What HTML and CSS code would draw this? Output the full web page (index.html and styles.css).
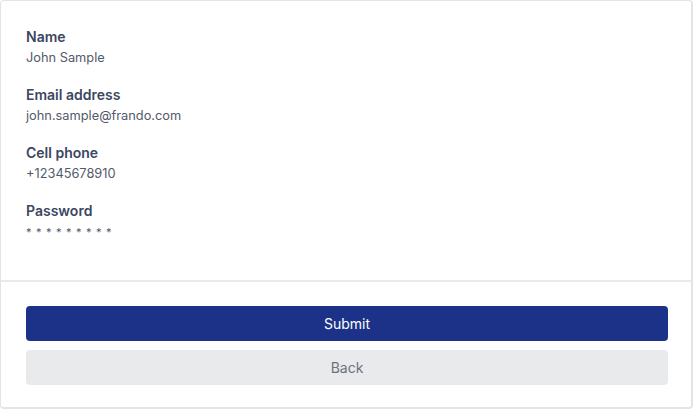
FILE: index.html
```html
<!DOCTYPE html>
<html lang="en">

<head>
    <meta charset="UTF-8">
    <meta name="viewport" content="width=device-width, initial-scale=1.0">
    <title>Review details</title>
    <link rel="stylesheet" href="styles.css">
</head>

<body>

    <div class="card">
        <div class="details">
            <div class="field">
                <p class="field-label">Name</p>
                <p class="field-value">John Sample</p>
            </div>
            <div class="field">
                <p class="field-label">Email address</p>
                <p class="field-value">john.sample@frando.com</p>
            </div>
            <div class="field">
                <p class="field-label">Cell phone</p>
                <p class="field-value">+12345678910</p>
            </div>
            <div class="field">
                <p class="field-label">Password</p>
                <p class="field-value password">* * * * * * * * *</p>
            </div>
        </div>

        <div class="actions">
            <button class="btn btn-primary">Submit</button>
            <button class="btn btn-secondary">Back</button>
        </div>
    </div>

</body>

</html>
```

FILE: styles.css
```css
body {
    margin: 0;
    padding: 0;
    background-color: white;
    font-family: Inter, "Noto Sans", sans-serif;
}

.card {
    width: 693px;
    height: 409px;
    box-sizing: border-box;
    border: 1px solid #e3e4e8;
    border-right-width: 2px;
    border-bottom-width: 2px;
    border-radius: 4px;
    background-color: white;
    display: flex;
    flex-direction: column;
}

.details {
    padding: 26px 25px 0 25px;
    height: 281px;
    box-sizing: border-box;
    border-bottom: 2px solid #e9eaee;
}

.field {
    margin-bottom: 17px;
}

.field-label {
    margin: 0;
    font-size: 14px;
    line-height: 20px;
    font-weight: 600;
    color: #3b4661;
}

.field-value {
    margin: 1px 0 0 0;
    font-size: 12.8px;
    line-height: 20px;
    color: #525a6b;
}

.field-value.password {
    font-size: 11px;
    letter-spacing: 0.7px;
}

.actions {
    display: flex;
    flex-direction: column;
    gap: 9px;
    padding: 24px 23px 0 25px;
}

.btn {
    height: 35px;
    border: none;
    border-radius: 4px;
    font-family: Inter, "Noto Sans", sans-serif;
    font-size: 14px;
    cursor: pointer;
}

.btn-primary {
    background-color: #1c3288;
    color: white;
}

.btn-secondary {
    background-color: #e9eaec;
    color: #6b7280;
}
```
